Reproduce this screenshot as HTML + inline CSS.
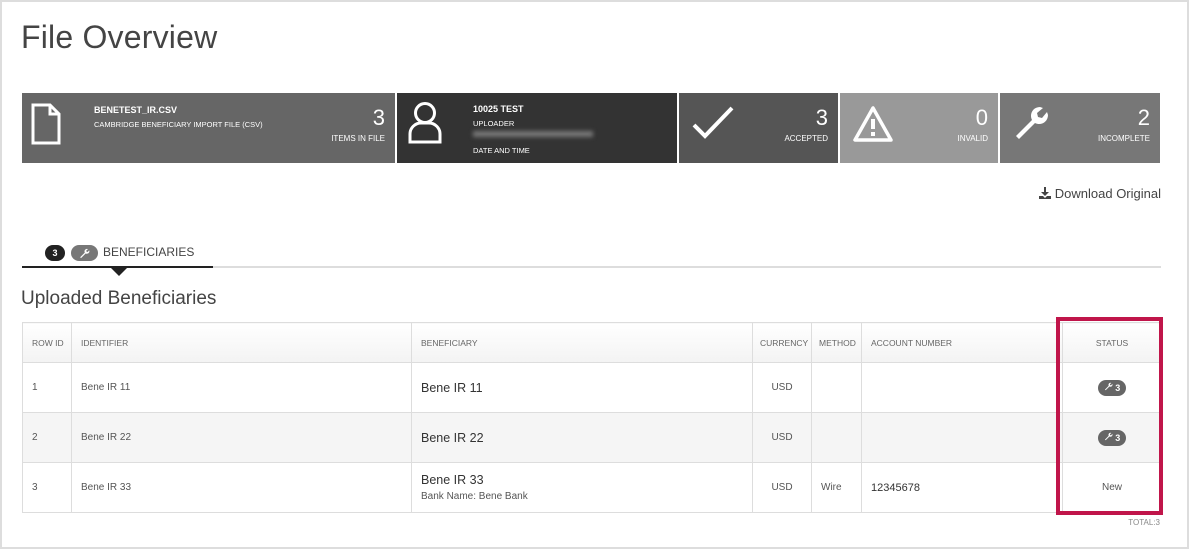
<!DOCTYPE html>
<html><head><meta charset="utf-8"><style>
*{margin:0;padding:0;box-sizing:border-box}
body{width:1190px;height:550px;background:#fff;font-family:"Liberation Sans",sans-serif;color:#333;position:relative;overflow:hidden}
.frame{position:absolute;left:0;top:0;width:1189px;height:549px;border:2px solid #ddd}
.abs{position:absolute}
h1{position:absolute;left:21px;top:19px;font-size:32px;font-weight:normal;color:#444;letter-spacing:0.2px}
.card{position:absolute;top:93px;height:70px;color:#fff}
.card .num{position:absolute;right:10px;top:12px;font-size:22px;font-weight:300}
.card .lbl{position:absolute;right:10px;top:41px;font-size:8px}
.t{font-size:9px;font-weight:bold}
.s{font-size:7.5px}
table{position:absolute;left:22px;top:322px;width:1139px;border-collapse:collapse;table-layout:fixed;font-size:10px;color:#555}
td,th{border:1px solid #ddd;padding:0 9px;text-align:left;font-weight:normal;white-space:nowrap}
th{height:40px;font-size:8.5px;color:#666;background:linear-gradient(#fff,#f3f3f3)}
td{height:50px}
tr.alt td{background:#f5f5f5}
.b{font-size:12.5px;color:#333}
.pill{display:inline-block;background:#666;color:#fff;border-radius:8px;font-size:9px;font-weight:bold;padding:2px 6px;line-height:11px}
</style></head><body>
<div class="frame"></div>
<h1>File Overview</h1>

<div class="card" style="left:22px;width:373px;background:#666">
<svg class="abs" style="left:9px;top:10px" width="30" height="42" viewBox="0 0 30 42"><path d="M2 2h17l9 9v29H2z M19 2v9h9" fill="none" stroke="#fff" stroke-width="3"/></svg>
<div class="abs t" style="left:72px;top:12px">BENETEST_IR.CSV</div>
<div class="abs s" style="left:72px;top:27px">CAMBRIDGE BENEFICIARY IMPORT FILE (CSV)</div>
<div class="num">3</div><div class="lbl">ITEMS IN FILE</div>
</div>
<div class="card" style="left:397px;width:280px;background:#333">
<svg class="abs" style="left:8px;top:8px" width="40" height="44" viewBox="0 0 40 44"><circle cx="20" cy="12" r="9.5" fill="none" stroke="#fff" stroke-width="3"/><path d="M5 41V33c0-6 5-11 11-11h8c6 0 11 5 11 11v8z" fill="none" stroke="#fff" stroke-width="3"/></svg>
<div class="abs t" style="left:76px;top:11px">10025 TEST</div>
<div class="abs s" style="left:76px;top:26px">UPLOADER</div>
<div class="abs" style="left:76px;top:38px;width:120px;height:6px;background:#777;filter:blur(2px)"></div>
<div class="abs s" style="left:76px;top:53px">DATE AND TIME</div>
</div>
<div class="card" style="left:679px;width:159px;background:#555">
<svg class="abs" style="left:12px;top:12px" width="44" height="34" viewBox="0 0 44 34"><path d="M3 20l11 11L41 3" fill="none" stroke="#fff" stroke-width="4"/></svg>
<div class="num">3</div><div class="lbl">ACCEPTED</div>
</div>
<div class="card" style="left:840px;width:158px;background:#999">
<svg class="abs" style="left:12px;top:12px" width="42" height="38" viewBox="0 0 42 38"><path d="M21 3L3 35h36z" fill="none" stroke="#fff" stroke-width="3.5" stroke-linejoin="round"/><rect x="19" y="14" width="4" height="10" fill="#fff"/><rect x="19" y="27" width="4" height="4" fill="#fff"/></svg>
<div class="num">0</div><div class="lbl">INVALID</div>
</div>
<div class="card" style="left:1000px;width:160px;background:#777">
<svg class="abs" style="left:12px;top:11px" width="38" height="38" viewBox="0 0 38 38"><path d="M4 32l16-16c-3-6 1-13 8-13l3 1-6 5 1 4 4 1 5-6 1 3c0 7-7 11-13 8L7 35z" fill="#fff"/></svg>
<div class="num">2</div><div class="lbl">INCOMPLETE</div>
</div>

<div class="abs" style="right:29px;top:186px;font-size:13px;color:#444">
<svg width="12" height="12" viewBox="0 0 12 12" style="vertical-align:-1px"><path d="M5 0h2v5h3L6 9 2 5h3z M0 9h4l2 2 2-2h4v3H0z" fill="#444"/></svg> Download Original</div>

<div class="abs" style="left:45px;top:245px;width:20px;height:16px;border-radius:8px;background:#222;color:#fff;font-size:9px;font-weight:bold;text-align:center;line-height:16px">3</div>
<div class="abs" style="left:71px;top:245px;width:27px;height:16px;border-radius:8px;background:#777"><svg style="position:absolute;left:8px;top:3px" width="11" height="11" viewBox="0 0 38 38"><path d="M4 32l16-16c-3-6 1-13 8-13l3 1-6 5 1 4 4 1 5-6 1 3c0 7-7 11-13 8L7 35z" fill="#fff"/></svg></div>
<div class="abs" style="left:103px;top:245px;font-size:12px;color:#444">BENEFICIARIES</div>
<div class="abs" style="left:22px;top:266px;width:1139px;height:2px;background:#ddd"></div>
<div class="abs" style="left:22px;top:266px;width:191px;height:2px;background:#222"></div>
<div class="abs" style="left:111px;top:268px;width:0;height:0;border-left:8px solid transparent;border-right:8px solid transparent;border-top:8px solid #222"></div>

<div class="abs" style="left:21px;top:288px;font-size:19px;color:#444">Uploaded Beneficiaries</div>

<table>
<colgroup><col style="width:49px"><col style="width:340px"><col style="width:341px"><col style="width:59px"><col style="width:50px"><col style="width:201px"><col style="width:99px"></colgroup>
<tr><th>ROW ID</th><th>IDENTIFIER</th><th>BENEFICIARY</th><th style="padding:0 7px">CURRENCY</th><th style="padding:0 7px">METHOD</th><th>ACCOUNT NUMBER</th><th style="text-align:center">STATUS</th></tr>
<tr><td>1</td><td>Bene IR 11</td><td class="b">Bene IR 11</td><td style="text-align:center">USD</td><td></td><td></td><td style="text-align:center"><span class="pill"><svg width="9" height="9" viewBox="0 0 38 38"><path d="M4 32l16-16c-3-6 1-13 8-13l3 1-6 5 1 4 4 1 5-6 1 3c0 7-7 11-13 8L7 35z" fill="#fff"/></svg> 3</span></td></tr>
<tr class="alt"><td>2</td><td>Bene IR 22</td><td class="b">Bene IR 22</td><td style="text-align:center">USD</td><td></td><td></td><td style="text-align:center"><span class="pill"><svg width="9" height="9" viewBox="0 0 38 38"><path d="M4 32l16-16c-3-6 1-13 8-13l3 1-6 5 1 4 4 1 5-6 1 3c0 7-7 11-13 8L7 35z" fill="#fff"/></svg> 3</span></td></tr>
<tr><td>3</td><td>Bene IR 33</td><td><div class="b">Bene IR 33</div><div style="font-size:10px;margin-top:4px">Bank Name: Bene Bank</div></td><td style="text-align:center">USD</td><td>Wire</td><td class="b" style="font-size:11px">12345678</td><td style="text-align:center">New</td></tr>
</table>
<div class="abs" style="left:1056px;top:317px;width:107px;height:198px;border:4px solid #c0154a"></div>
<div class="abs" style="right:30px;top:518px;font-size:8px;color:#888">TOTAL:3</div>
</body></html>
